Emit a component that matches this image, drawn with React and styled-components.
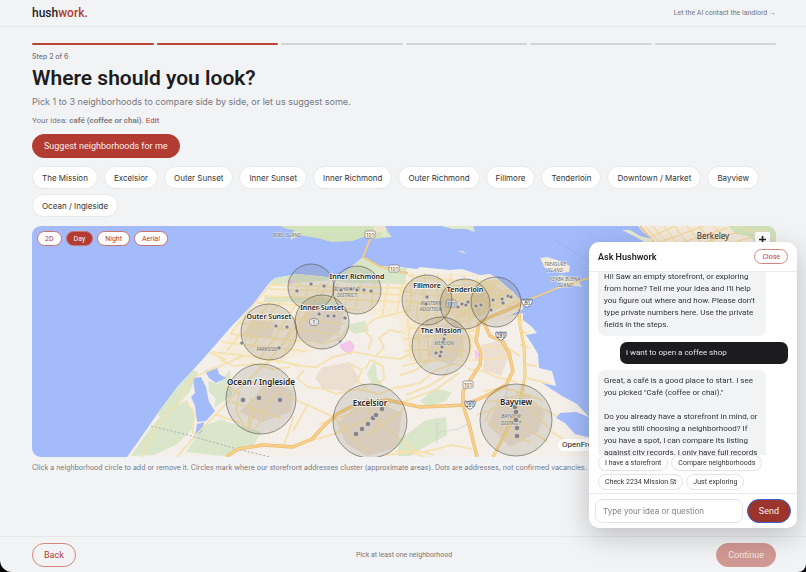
import React, { useEffect, useRef, useState } from 'react';
import styled, { createGlobalStyle } from 'styled-components';

const GlobalStyle = createGlobalStyle`
	* {
		box-sizing: border-box;
	}
	body {
		margin: 0;
		background: #000;
		font-family: Roboto, 'Liberation Sans', sans-serif;
		color: #1d1d1f;
	}
	button,
	input {
		font-family: inherit;
		margin: 0;
	}
`;

const Page = styled.div`
	display: flex;
	flex-direction: column;
	min-height: 100vh;
	overflow: hidden;
	background: #f2f3f5;
	border-radius: 0 0 8px 12px;
`;

const Header = styled.header`
	display: flex;
	align-items: center;
	justify-content: space-between;
	height: 27px;
	padding: 0 30px 0 32px;
	border-bottom: 1px solid #e8e9eb;
`;

const Logo = styled.a`
	color: #1d1d1f;
	font-size: 12px;
	font-weight: 500;
	text-decoration: none;

	span {
		color: #b23c32;
	}
`;

const HeaderLink = styled.a`
	color: #77787c;
	font-size: 7px;
	text-decoration: none;
`;

const Main = styled.main`
	flex: 1;
	padding: 16px 30px 0 32px;
`;

const Progress = styled.div`
	display: flex;
	gap: 3px;
`;

const Segment = styled.div`
	flex: 1;
	height: 2px;
	border-radius: 1px;
	background: ${({ $done }) => ($done ? '#bb4438' : '#d4d5d7')};
`;

const Step = styled.p`
	margin: 7px 0 0;
	color: #77787c;
	font-family: Inter, sans-serif;
	font-size: 7px;
	line-height: 10px;
	font-weight: 500;
`;

const Title = styled.h1`
	margin: 3px 0 0;
	font-size: 21px;
	line-height: 26px;
	font-weight: 600;
`;

const Lead = styled.p`
	margin: 4px 0 0;
	color: #77787c;
	font-family: Inter, sans-serif;
	font-size: 9px;
	line-height: 14px;
`;

const Idea = styled.p`
	margin: 6px 0 7px;
	color: #77787c;
	font-size: 8px;
	line-height: 12px;

	b {
		font-weight: 600;
	}
	a {
		color: #b23c32;
		text-decoration: none;
	}
`;

const Pill = styled.button`
	height: 24px;
	padding: 0 11px;
	border: 1px solid ${({ $outline }) => ($outline ? '#d3867f' : '#b23c32')};
	border-radius: 12px;
	background: ${({ $outline }) => ($outline ? 'transparent' : '#b23c32')};
	color: ${({ $outline }) => ($outline ? '#b23c32' : '#fbeeed')};
	font-size: 9px;
	cursor: pointer;

	&:disabled {
		border-color: #d19994;
		background: #d19994;
		color: #f5e6e5;
	}
`;

const Chips = styled.div`
	display: flex;
	flex-wrap: wrap;
	gap: 5px 6px;
	margin: 8px 0 9px;
`;

const Chip = styled.button`
	height: 23px;
	padding: 0 9px;
	border: 1px solid #e7e8ea;
	border-radius: 12px;
	background: #fff;
	color: #333336;
	font-family: Inter, sans-serif;
	font-size: 8px;
	cursor: pointer;
`;

const MapBox = styled.div`
	position: relative;
	height: 231px;
	overflow: hidden;
	border-radius: 9px;
	background: #a3bbfb;

	svg {
		display: block;
		width: 100%;
		height: 100%;
	}
`;

const MapModes = styled.div`
	position: absolute;
	top: 5px;
	left: 5px;
	display: flex;
	gap: 4px;
`;

const Mode = styled.button`
	height: 15px;
	padding: 0 7px;
	border: 1px solid #c9736b;
	border-radius: 8px;
	background: ${({ $active }) => ($active ? '#b23c32' : '#fff')};
	color: ${({ $active }) => ($active ? '#fbeeed' : '#b23c32')};
	font-size: 7px;
	cursor: pointer;
`;

const ZoomIn = styled.button`
	position: absolute;
	top: 5px;
	right: 5px;
	display: grid;
	place-items: center;
	width: 17px;
	height: 17px;
	padding: 0;
	border: 1px solid #d6d9d2;
	border-radius: 3px;
	background: #fff;

	svg {
		width: 7px;
		height: 7px;
	}
`;

const Attribution = styled.div`
	position: absolute;
	right: 160px;
	bottom: 6px;
	padding: 0 4px;
	border-radius: 6px;
	background: #fff;
	font-size: 8px;
	line-height: 12px;
`;

const Caption = styled.p`
	margin: 5px 0 0;
	color: #77787c;
	font-family: Inter, sans-serif;
	font-size: 7px;
	line-height: 12px;
`;

const Footer = styled.footer`
	display: grid;
	grid-template-columns: 1fr auto 1fr;
	align-items: center;
	height: 36px;
	padding: 0 30px 0 32px;
	border-top: 1px solid #e6e7e9;
	color: #77787c;
	font-size: 7px;

	button:first-child {
		justify-self: start;
	}
	button:last-child {
		justify-self: end;
	}
`;

const Panel = styled.section`
	position: fixed;
	right: 9px;
	bottom: 44px;
	display: flex;
	flex-direction: column;
	width: 208px;
	height: 50vh;
	overflow: hidden;
	border-radius: 10px;
	background: #fff;
	box-shadow: 0 8px 28px rgba(0, 0, 0, 0.22);
`;

const PanelHead = styled.div`
	display: flex;
	align-items: center;
	justify-content: space-between;
	height: 30px;
	padding: 0 9px;
	border-bottom: 1px solid #ebebed;

	h2 {
		margin: 0;
		font-size: 9px;
		font-weight: 600;
	}
`;

const CloseButton = styled(Mode)`
	border-color: #d3867f;
`;

const Log = styled.div`
	display: flex;
	flex: 1;
	flex-direction: column;
	gap: 6px;
	min-height: 0;
	padding: 8px 9px;
	overflow-y: auto;
	scrollbar-width: none;
`;

const Bubble = styled.p`
	flex: none;
	width: 168px;
	margin: 0;
	padding: 5px 6px;
	align-self: ${({ $mine }) => ($mine ? 'flex-end' : 'flex-start')};
	border-radius: 7px;
	background: ${({ $mine }) => ($mine ? '#1c1c1e' : '#f2f3f5')};
	color: ${({ $mine }) => ($mine ? '#e4e4e6' : '#333336')};
	font-size: 8px;
	line-height: 12px;
	white-space: pre-line;
`;

const Replies = styled.div`
	display: flex;
	flex-wrap: wrap;
	gap: 3px;
	padding: 0 9px 3px;
`;

const Reply = styled.button`
	height: 16px;
	padding: 0 6px;
	border: 1px solid #e4e4e7;
	border-radius: 8px;
	background: #fff;
	color: #333336;
	font-size: 7px;
	cursor: pointer;
`;

const Ask = styled.form`
	display: flex;
	gap: 4px;
	padding: 5px 6px;
	border-top: 1px solid #ebebed;

	input {
		flex: 1;
		min-width: 0;
		height: 24px;
		padding: 0 7px;
		border: 1px solid #e4e4e7;
		border-radius: 7px;
		font-family: Inter, sans-serif;
		font-size: 8px;
	}
	input::placeholder {
		color: #808084;
	}
	button {
		border-color: #3d62cc;
		background: #9b352b;
	}
`;

const AreaName = styled.text`
	fill: #222;
	stroke: #fff;
	stroke-opacity: 0.8;
	stroke-width: 1.5px;
	paint-order: stroke;
	font: ${({ $size }) => `600 ${$size || 7}px 'Noto Sans', sans-serif`};
	text-anchor: middle;
`;

const PlaceName = styled.text`
	fill: #6c6c6c;
	stroke: #fff;
	stroke-opacity: 0.6;
	stroke-width: 1px;
	paint-order: stroke;
	font: italic 400 5px 'Noto Sans', sans-serif;
	text-anchor: middle;
`;

const neighborhoods = [
	'The Mission',
	'Excelsior',
	'Outer Sunset',
	'Inner Sunset',
	'Inner Richmond',
	'Outer Richmond',
	'Fillmore',
	'Tenderloin',
	'Downtown / Market',
	'Bayview',
	'Ocean / Ingleside',
];

const land =
	'M127 457L144 433L160 410L178 386L193 370L210 351L230 328L253 304L270 282L275 278L297 274L320 276L333 278L347 270L357 262L363 257L370 261L378 266L400 267L417 269L420 267L450 270L462 269L480 275L490 274L497 278L506 286L513 292L522 302L523 309L511 315L500 318L523 313L523 320L531 326L537 333L526 335L532 344L538 354L539 368L552 371L556 386L542 383L562 396L577 404L589 417L576 412L560 413L556 418L565 423L575 434L592 438L610 457Z';

const parks = [
	'M275 278L297 274L333 278L347 270L363 257L378 266L407 268L405 284L348 283L332 280L268 285Z',
	'M266 296L320 297L338 302L338 308L292 302L264 302Z',
	'M193 370L198 372L190 391L173 411L160 417L154 412L168 393Z',
	'M208 381L218 384L230 370L232 395L214 408L216 399L209 392Z',
	'M160 417L187 400L194 416L192 430L177 444L154 455L131 456L149 430Z',
	'M203 426L220 420L262 432L252 447L223 456L186 452Z',
	'M350 324L365 321L369 331L355 334L348 329Z',
	'M370 368L375 361L377 378L386 389L372 384L367 374Z',
	'M398 441L426 420L446 417L447 435L419 450L410 456L398 456Z',
	'M420 401L435 389L452 392L446 401L427 407Z',
	'M214 424L224 420L240 430L238 444L222 449L216 440Z',
];

const blocks = [
	'M251 320L275 322L272 338L243 337Z',
	'M316 305L345 307L340 331L322 344L296 339L300 319Z',
	'M322 367L350 362L360 380L348 391L323 389L315 378Z',
	'M337 423L367 398L402 413L397 448L367 456L347 444Z',
	'M252 400L267 380L294 391L291 412L262 422L239 412Z',
	'M481 345L505 339L509 355L501 376L483 370L484 354Z',
	'M498 398L527 393L545 413L538 432L510 447L488 425Z',
	'M438 326L461 320L464 347L451 366L427 355Z',
];

// main streets, drawn with a pale casing
const streets = [
	'M142 457L157 426L180 401L189 382L196 376L225 364L243 356',
	'M177 457L193 438L222 408L240 388L264 365L284 344L300 321L314 301',
	'M186 402L194 413L193 434M214 414L240 423M210 353L226 360',
	'M231 333L258 299L275 281M241 337L257 318L275 297M250 340L263 322L284 298',
	'M212 352L249 356L300 365M222 342L257 346L305 351M230 334L268 338L308 342',
	'M239 323L275 328L310 331L340 335M246 314L300 319L345 324M257 303L320 306L360 310',
	'M264 296L333 299L400 302M269 289L335 291L400 295M271 285L345 287L407 288',
	'M258 360L272 342L296 304M267 364L289 333L307 299M278 364L303 323L321 283',
	'M245 340L264 312M251 348L271 320M227 351L240 334M300 281L292 299M312 280L305 297M328 283L317 302',
	'M338 283L330 302M349 286L345 306M361 284L355 308M374 283L371 310M388 283L382 317M402 284L397 312',
	'M284 362L298 366L316 367L333 357L354 352L381 357L400 359L410 354',
	'M220 360L234 366L254 364L273 369L290 367M304 370L297 378L308 387L324 389L336 394L358 389L379 394L400 386',
	'M226 386L239 393L236 411L246 430M251 397L248 430M269 380L256 405L249 430M276 391L262 416L255 430',
	'M232 402L250 408L281 418M280 393L298 401L332 416L348 431L366 451M294 416L283 448M308 404L293 431',
	'M319 424L347 415L363 402M338 431L361 423L390 404M366 436L389 420L405 408M365 406L385 428L414 450L434 455',
	'M402 366L420 362L450 359M405 351L439 349L466 351M404 339L438 336L475 338M409 328L475 331',
	'M407 307L411 359M417 307L420 361M426 307L429 361M436 307L439 361M446 307L450 358M457 307L461 358M469 309L470 353',
	'M400 291L438 296L490 302M403 283L446 287L502 290M408 276L450 280L495 282M405 301L452 307L512 306',
	'M412 273L410 309M425 273L423 312M438 273L437 312M451 273L449 313M464 275L462 314M477 278L473 318M489 280L485 313',
	'M438 319L455 310L478 297L499 281M449 324L479 304L510 290M461 323L487 311L519 301M495 280L518 300M481 285L506 307',
	'M368 350L372 339L363 329L374 319L394 314L410 310M376 356L384 347L379 338L390 330L404 333',
	'M400 375L414 371L431 360M365 369L371 360L383 366L384 379L375 385M350 364L362 370L357 381L367 388',
	'M398 388L420 383L436 370L454 364L466 366M406 395L429 386L448 374M397 404L435 390L459 373',
	'M467 369L483 371L496 377L517 382M472 360L492 359L510 355M483 346L509 349L520 356',
	'M484 391L501 388L516 391L542 400M486 402L515 398L539 407L559 417M477 415L507 404L524 396',
	'M494 406L486 419L505 435L531 442M515 391L535 413L552 432L577 448M509 404L531 431L548 442',
	'M396 451L424 452L452 445L472 449M386 455L411 452L425 457M258 444L290 446L324 437L344 431',
	'M520 320L536 324M520 331L528 334M520 345L530 348M523 364L537 366M527 378L550 384M350 325L340 339L325 343',
];

const freeways = [
	'M226 457L238 449L264 445L293 447L312 439L324 426L337 414L355 405L387 400L420 407L445 406L464 405L486 396L506 385L513 371L509 353L502 341L490 336L483 321',
	'M477 457L469 424L463 405L463 391L480 365L481 353L476 341L479 323L490 317L512 308L525 302',
	'M375 231L369 242L363 257L379 266L401 272L408 273',
	'M523 302L545 293L560 287L589 278L600 275',
];

const thirdStreet = 'M493 457L507 430L520 402L525 376L524 347L520 325L519 309';

const areas = [
	{ x: 311, y: 287, r: 23, dots: [[297, 291], [311, 284], [324, 286]] },
	{ name: 'Inner Richmond', x: 357, y: 290, r: 24, ly: 279, dots: [[341, 290], [351, 289], [357, 290], [364, 290], [371, 291]] },
	{ name: 'Inner Sunset', x: 322, y: 322, r: 27, ly: 310, dots: [[319, 314], [328, 316], [334, 316], [345, 318]] },
	{ name: 'Outer Sunset', x: 269, y: 332, r: 28, ly: 319, dots: [[276, 326], [287, 327], [242, 343], [279, 348]] },
	{ name: 'Ocean / Ingleside', x: 261, y: 399, r: 35, ly: 385, size: 8, big: true, dots: [[243, 400], [259, 398], [280, 400]] },
	{ name: 'Excelsior', x: 370, y: 421, r: 37, ly: 406, size: 8, big: true, dots: [[356, 434], [362, 429], [368, 424], [373, 418], [376, 415], [382, 409]] },
	{ name: 'Fillmore', x: 427, y: 300, r: 25, ly: 288, dots: [[427, 297], [426, 304]] },
	{ name: 'Tenderloin', x: 465, y: 304, r: 25, ly: 292, dots: [[458, 307], [462, 304], [466, 305], [468, 302], [476, 306], [481, 305]] },
	{ x: 496, y: 302, r: 25, dots: [[491, 310], [493, 300], [502, 299], [503, 303], [508, 296], [511, 297]] },
	{ name: 'The Mission', x: 441, y: 346, r: 29, ly: 333, dots: [[436, 353], [441, 352], [440, 356], [442, 347], [443, 342], [444, 339], [445, 334]] },
	{ name: 'Bayview', x: 516, y: 420, r: 36, ly: 405, size: 8, big: true, dots: [[515, 407], [516, 412], [516, 420], [517, 428], [517, 436]] },
];

const Shield = ({ x, y, children }) => (
	<g>
		<rect x={x - 5} y={y - 4} width="10" height="7" rx="1.5" fill="#fff" stroke="#777" strokeWidth=".7" />
		<text x={x} y={y + 1.5} textAnchor="middle" fontSize="5" fontFamily="Noto Sans" fill="#333">
			{children}
		</text>
	</g>
);

const Interstate = ({ x, y, children }) => (
	<g>
		<path
			d={`M${x - 5} ${y - 4}q2.5 1 5 0q2.5 1 5 0q1.5 5-5 8.500q-6.500-3.500-5-8.500Z`}
			fill="#fff"
			stroke="#66718d"
			strokeWidth=".9"
		/>
		<path d={`M${x - 4} ${y - 3}h8`} stroke="#66718d" strokeWidth="1" />
		<text x={x} y={y + 2} textAnchor="middle" fontSize="5" fontFamily="Noto Sans" fill="#333">
			{children}
		</text>
	</g>
);

const CityMap = () => (
	<svg viewBox="32 226 744 231" preserveAspectRatio="xMidYMid slice" role="img" aria-label="Map of San Francisco">
		<defs>
			<clipPath id="land">
				<path d={land} />
			</clipPath>
			<pattern id="blocks" width="4" height="5" patternUnits="userSpaceOnUse" patternTransform="skewX(-8)">
				<path d="M0 0H4M0 0V5" stroke="#f2dfae" strokeWidth=".8" />
			</pattern>
			<clipPath id="eastBay">
				<path d="M638 226L643 232L652 239L653 262H776V226Z" />
			</clipPath>
		</defs>

		<path d="M555 240L590 262" stroke="#91a6e1" strokeWidth=".5" />
		<path
			d="M280 226L287 229L294 230L290 241L298 235L317 238L332 242L352 241L364 237L373 239L391 237L385 226Z"
			fill="#d2e3bb"
		/>
		<path d="M373 226H385L387 231L374 233Z" fill="#ece4cb" />
		<path d="M441 226L453 229L466 229L475 232L473 226Z" fill="#dce9ca" />
		<path d="M458 251L463 251L466 254ZM382 230L390 235L392 237L381 237Z" fill="#e4e8ca" />
		<path d="M540 258L547 257L557 260L570 266L569 272L561 273L545 268Z" fill="#f4ead8" />
		<path d="M550 278L562 275L579 282L582 287L568 285L557 281Z" fill="#e3e4cf" />

		<path d={land} fill="#f4efe8" />
		<g clipPath="url(#land)" fill="none" strokeLinejoin="round">
			<path
				d="M230 336L270 290L400 284L520 290V318L478 324L472 363L405 361L398 318L350 312L326 347L268 365L214 358Z"
				fill="#f6ecdc"
			/>
			<path
				d="M400 273H500L522 302L480 316L472 363L410 361L404 318Z"
				fill="url(#blocks)"
			/>
			<path d="M440 287L488 281L514 296L482 314L458 320L442 309Z" fill="#f2ddb0" opacity=".6" />
			{blocks.map((d) => (
				<path key={d} d={d} fill="#ecdfd1" />
			))}
			{parks.map((d) => (
				<path key={d} d={d} fill="#d9e6ca" />
			))}
			<path
				d="M193 378L201 377L206 387L209 402L215 411L206 421L197 422L195 406L191 397L195 393ZM205 371L217 367L219 374L226 378L216 383L209 378ZM197 424L204 422L202 432L195 436ZM337 337L342 341L340 344Z"
				fill="#a3bbfb"
			/>
			<path d="M339 345L350 340L355 346L351 355L342 350ZM474 349L480 354L476 361ZM287 279L294 281L290 285Z" fill="#f4c7ea" />
			<path d="M448 369L439 381M437 422V444M438 432L458 429L470 423M504 406L508 385" stroke="#c6d0d6" strokeWidth=".7" />
			{streets.map((d) => (
				<path key={d} d={d} stroke="#efdcae" strokeWidth="1.6" />
			))}
			{streets.map((d) => (
				<path key={d} d={d} stroke="#fae5ac" strokeWidth="1" />
			))}
			<path d="M151 426L188 435L237 449L270 457" stroke="#aaa" strokeWidth="1" strokeDasharray="2 2" />
			<path d={thirdStreet} stroke="#ecc77d" strokeWidth="3" />
			<path d={thirdStreet} stroke="#f8dd94" strokeWidth="1.8" />
		</g>
		<g fill="none" strokeLinejoin="round">
			{freeways.map((d, i) => (
				<path key={d} d={d} stroke="#e9bd78" strokeWidth={i < 2 ? 3.5 : 1.8} />
			))}
			{freeways.map((d, i) => (
				<path key={d} d={d} stroke="#f9cf87" strokeWidth={i < 2 ? 2.2 : 1.2} />
			))}
		</g>

		<path d="M622 230L630 230L640 236L652 239L653 247L634 236Z" fill="#e8ebd2" />
		<g clipPath="url(#eastBay)" fill="none">
			<path d="M630 226H776V262H640Z" fill="#f5ead8" />
			<path d="M728 226H776V250H766L748 236L736 234Z" fill="#cfe2b9" />
			<path
				d="M645 226L663 247M653 226L673 249M664 226L681 249M675 226L691 249M687 226L706 249M698 226L720 249M713 226L739 249M648 238L675 226M655 244L704 226M668 247L727 228M690 247L738 232M718 247L752 237"
				stroke="#f2d493"
				strokeWidth="1"
			/>
			<path d="M640 226L652 240L660 250" stroke="#ecc27d" strokeWidth="1.5" />
			<path d="M738 226L752 232L765 230L776 240" stroke="#f5dc9c" strokeWidth="1.2" />
		</g>
		<text x="713" y="239" textAnchor="middle" fontSize="8" fontFamily="Noto Sans" fill="#333">
			Berkeley
		</text>

		<PlaceName x="287" y="237">BIRD ISLAND</PlaceName>
		<PlaceName x="347" y="291">RICHMOND</PlaceName>
		<PlaceName x="347" y="297">DISTRICT</PlaceName>
		<PlaceName x="267" y="351">PARKSIDE</PlaceName>
		<PlaceName x="431" y="305">WESTERN</PlaceName>
		<PlaceName x="431" y="311">ADDITION</PlaceName>
		<PlaceName x="444" y="345">MISSION</PlaceName>
		<PlaceName x="511" y="418">BAYVIEW</PlaceName>
		<PlaceName x="511" y="425">DISTRICT</PlaceName>
		<PlaceName x="555" y="266">TREASURE</PlaceName>
		<PlaceName x="555" y="272">ISLAND</PlaceName>
		<PlaceName x="565" y="281">YERBA BUENA</PlaceName>
		<PlaceName x="565" y="287">ISLAND</PlaceName>

		<Shield x={370} y={235}>101</Shield>
		<Shield x={394} y={269}>101</Shield>
		<Shield x={451} y={304}>101</Shield>
		<Shield x={468} y={385}>101</Shield>
		<ellipse cx="314" cy="322" rx="4.500" ry="3.500" fill="#fff" stroke="#777" strokeWidth=".7" />
		<text x="314" y="324" textAnchor="middle" fontSize="5" fontFamily="Noto Sans" fill="#333">
			1
		</text>
		<Interstate x={527} y={303}>80</Interstate>
		<Interstate x={501} y={336}>280</Interstate>
		<Interstate x={470} y={405}>280</Interstate>

		{areas.map(({ x, y, r }) => (
			<circle
				key={`${x}-${y}`}
				cx={x}
				cy={y}
				r={r}
				fill="#6d6250"
				fillOpacity=".15"
				stroke="#53534c"
				strokeOpacity=".75"
				strokeWidth=".8"
			/>
		))}
		{areas.map(({ x, dots, big }) =>
			dots.map(([dx, dy]) => (
				<circle
					key={`${x}-${dx}-${dy}`}
					cx={dx}
					cy={dy}
					r={big ? 2.8 : 2.1}
					fill="#858588"
					stroke="#eee"
					strokeWidth=".6"
				/>
			))
		)}
		{areas
			.filter(({ name }) => name)
			.map(({ name, x, ly, size }) => (
				<AreaName key={name} x={x} y={ly} $size={size}>
					{name}
				</AreaName>
			))}
	</svg>
);

const App = () => {
	const [mode, setMode] = useState('Day');
	const logRef = useRef(null);

	useEffect(() => {
		logRef.current.scrollTop = 14;
	}, []);

	return (
		<Page>
			<GlobalStyle />
			<Header>
				<Logo href="#">
					hush<span>work.</span>
				</Logo>
				<HeaderLink href="#contact">Let the AI contact the landlord →</HeaderLink>
			</Header>

			<Main>
				<Progress>
					{[1, 2, 3, 4, 5, 6].map((n) => (
						<Segment key={n} $done={n <= 2} />
					))}
				</Progress>
				<Step>Step 2 of 6</Step>
				<Title>Where should you look?</Title>
				<Lead>Pick 1 to 3 neighborhoods to compare side by side, or let us suggest some.</Lead>
				<Idea>
					Your idea: <b>café (coffee or chai)</b>. <a href="#edit">Edit</a>
				</Idea>
				<Pill type="button">Suggest neighborhoods for me</Pill>
				<Chips>
					{neighborhoods.map((name) => (
						<Chip key={name} type="button">
							{name}
						</Chip>
					))}
				</Chips>
				<MapBox>
					<CityMap />
					<MapModes>
						{['2D', 'Day', 'Night', 'Aerial'].map((name) => (
							<Mode key={name} type="button" $active={mode === name} onClick={() => setMode(name)}>
								{name}
							</Mode>
						))}
					</MapModes>
					<ZoomIn type="button" aria-label="Zoom in">
						<svg viewBox="0 0 7 7">
							<path d="M3.500 .5V6.500M.5 3.500H6.500" stroke="#222" strokeWidth="1.600" strokeLinecap="round" />
						</svg>
					</ZoomIn>
					<Attribution>OpenFreeMap</Attribution>
				</MapBox>
				<Caption>
					Click a neighborhood circle to add or remove it. Circles mark where our storefront addresses
					cluster (approximate areas). Dots are addresses, not confirmed vacancies.
				</Caption>
			</Main>

			<Footer>
				<Pill type="button" $outline>
					Back
				</Pill>
				<span>Pick at least one neighborhood</span>
				<Pill type="button" disabled>
					Continue
				</Pill>
			</Footer>

			<Panel aria-label="Ask Hushwork">
				<PanelHead>
					<h2>Ask Hushwork</h2>
					<CloseButton type="button">Close</CloseButton>
				</PanelHead>
				<Log ref={logRef}>
					<Bubble>
						Hi! Saw an empty storefront, or exploring from home? Tell me your idea and I'll help you
						figure out where and how. Please don't type private numbers here. Use the private fields
						in the steps.
					</Bubble>
					<Bubble $mine>i want to open a coffee shop</Bubble>
					<Bubble>
						{'Great, a café is a good place to start. I see you picked "Café (coffee or chai)."\n\nDo you already have a storefront in mind, or are you still choosing a neighborhood? If you have a spot, I can compare its listing against city records. I only have full records'}
					</Bubble>
				</Log>
				<Replies>
					<Reply type="button">I have a storefront</Reply>
					<Reply type="button">Compare neighborhoods</Reply>
					<Reply type="button">Check 2234 Mission St</Reply>
					<Reply type="button">Just exploring</Reply>
				</Replies>
				<Ask onSubmit={(e) => e.preventDefault()}>
					<input type="text" aria-label="Your message" placeholder="Type your idea or question" />
					<Pill type="submit">Send</Pill>
				</Ask>
			</Panel>
		</Page>
	);
};

export default App;
